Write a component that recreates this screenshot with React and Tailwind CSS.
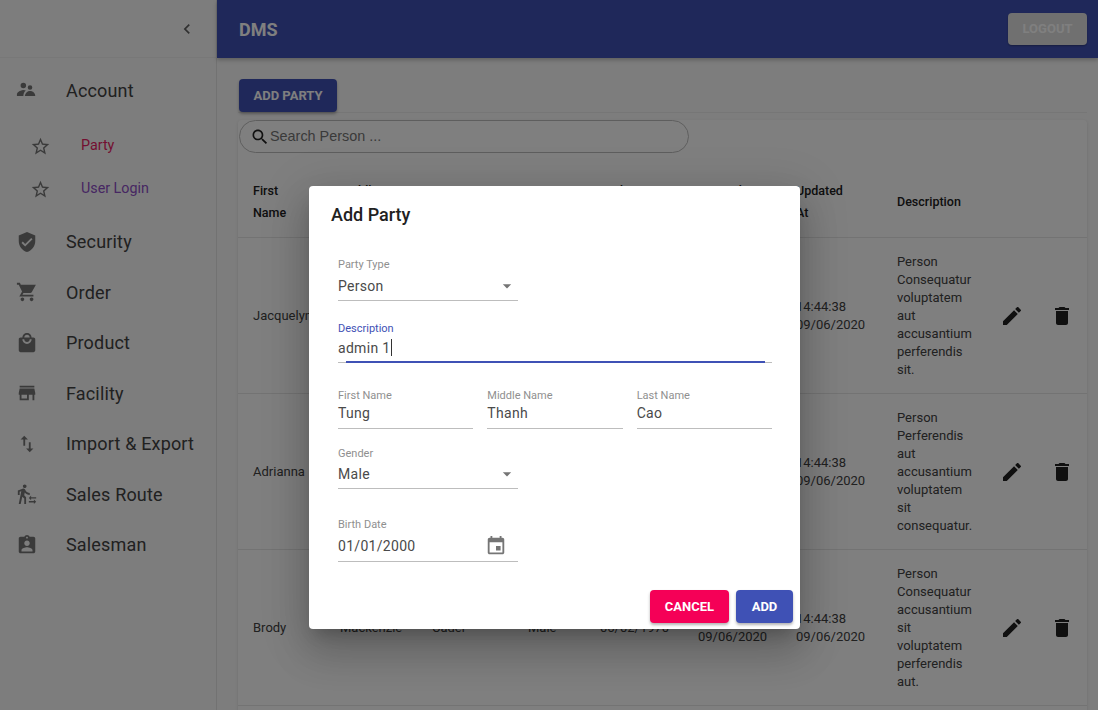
import React from 'react';

const ICONS = {
    // two people, drawn by hand: the package icons have the heads level
    people: 'M8 4.2a3 3 0 1 0 0 6a3 3 0 1 0 0-6z M15.3 6.8a2.5 2.5 0 1 0 0 5a2.5 2.5 0 1 0 0-5z M1 18.5v-1.5c0-2.2 3-4.5 7-5 1 0 2 .2 2.7.6C9 14 8.2 16 8 18.5z M9.7 18.5c.3-2.6 2-5.5 5.6-5.5 3.4 0 5.7 2.4 5.7 5.5z',
    star: 'M22 9.24l-7.19-.62L12 2 9.19 8.63 2 9.24l5.46 4.73L5.82 21 12 17.27 18.18 21l-1.63-7.03L22 9.24zM12 15.4l-3.76 2.27 1-4.28-3.32-2.88 4.38-.38L12 6.1l1.71 4.04 4.38.38-3.32 2.88 1 4.28L12 15.4z',
    security: 'M12 1L3 5v6c0 5.55 3.84 10.74 9 12 5.16-1.26 9-6.45 9-12V5l-9-4zm-2 16l-4-4 1.41-1.41L10 14.17l6.59-6.59L18 9l-8 8z',
    cart: 'M7 18c-1.1 0-1.99.9-1.99 2S5.9 22 7 22s2-.9 2-2-.9-2-2-2zm10 0c-1.1 0-1.99.9-1.99 2s.89 2 1.99 2 2-.9 2-2-.9-2-2-2zm-1.45-5c.75 0 1.41-.41 1.75-1.03L21.7 4H5.21l-.94-2H1v2h2l3.6 7.59L3.62 17H19v-2H7l1.1-2h7.45z',
    mall: 'M19 6h-2c0-2.76-2.24-5-5-5S7 3.24 7 6H5c-1.1 0-1.99.9-1.99 2L3 20c0 1.1.9 2 2 2h14c1.1 0 2-.9 2-2V8c0-1.1-.9-2-2-2zm-7-3c1.66 0 3 1.34 3 3H9c0-1.66 1.34-3 3-3zm0 10c-2.76 0-5-2.24-5-5h2c0 1.66 1.34 3 3 3s3-1.34 3-3h2c0 2.76-2.24 5-5 5z',
    store: 'M20 4H4v2h16V4zm1 10v-2l-1-5H4l-1 5v2h1v6h10v-6h4v6h2v-6h1zm-9 4H6v-4h6v4z',
    importExport: 'M9 3L5 6.99h3V14h2V6.99h3L9 3zm7 14.01V10h-2v7.01h-3L15 21l4-3.99h-3z',
    transfer: 'M16.49 15.5v-1.75L14 16.25l2.49 2.5V17H22v-1.5zm3.02 4.25H14v1.5h5.51V23L22 20.5 19.51 18zM9.5 5.5c1.1 0 2-.9 2-2s-.9-2-2-2-2 .9-2 2 .9 2 2 2zM5.75 8.9L3 23h2.1l1.75-8L9 17v6h2v-7.55L8.95 13.4l.6-3C10.85 12 12.8 13 15 13v-2c-1.85 0-3.45-1-4.35-2.45l-.95-1.6C9.35 6.35 8.7 6 8 6c-.25 0-.5.05-.75.15L2 8.3V13h2V9.65l1.75-.75',
    assignment: 'M19 3h-4.18C14.4 1.84 13.3 1 12 1c-1.3 0-2.4.84-2.82 2H5c-1.1 0-2 .9-2 2v14c0 1.1.9 2 2 2h14c1.1 0 2-.9 2-2V5c0-1.1-.9-2-2-2zm-7 0c.55 0 1 .45 1 1s-.45 1-1 1-1-.45-1-1 .45-1 1-1zm0 4c1.66 0 3 1.34 3 3s-1.34 3-3 3-3-1.34-3-3 1.34-3 3-3zm6 12H6v-1.4c0-2 4-3.1 6-3.1s6 1.1 6 3.1V19z',
    edit: 'M3 17.25V21h3.75L17.81 9.94l-3.75-3.75L3 17.25zM20.71 7.04c.39-.39.39-1.02 0-1.41l-2.34-2.34c-.39-.39-1.02-.39-1.41 0l-1.83 1.83 3.75 3.75 1.83-1.83z',
    trash: 'M6 19c0 1.1.9 2 2 2h8c1.1 0 2-.9 2-2V7H6v12zM19 4h-3.5l-1-1h-5l-1 1H5v2h14V4z',
    search: 'M15.5 14h-.79l-.28-.27C15.41 12.59 16 11.11 16 9.5 16 5.91 13.09 3 9.5 3S3 5.91 3 9.5 5.91 16 9.5 16c1.61 0 3.09-.59 4.23-1.57l.27.28v.79l5 4.99L20.49 19l-4.99-5zm-6 0C7.01 14 5 11.99 5 9.5S7.01 5 9.5 5 14 7.01 14 9.5 11.99 14 9.5 14z',
    event: 'M17 12h-5v5h5v-5zM16 1v2H8V1H6v2H5c-1.11 0-1.99.9-1.99 2L3 19c0 1.1.89 2 2 2h14c1.1 0 2-.9 2-2V5c0-1.1-.9-2-2-2h-1V1h-2zm3 18H5V8h14v11z',
    chevron: 'M15.41 7.41L14 6l-6 6 6 6 1.41-1.41L10.83 12z',
    dropdown: 'M7 10l5 5 5-5z',
};

function Icon({ name, className }) {
    return (
        <svg viewBox="0 0 24 24" fill="currentColor" className={className}>
            <path d={ICONS[name]} />
        </svg>
    );
}

const MENU_TOP = [{ icon: 'people', label: 'Account' }];
const MENU_BOTTOM = [
    { icon: 'security', label: 'Security' },
    { icon: 'cart', label: 'Order' },
    { icon: 'mall', label: 'Product' },
    { icon: 'store', label: 'Facility' },
    { icon: 'importExport', label: 'Import & Export' },
    { icon: 'transfer', label: 'Sales Route' },
    { icon: 'assignment', label: 'Salesman' },
];

const HEADERS = ['First Name', 'Middle Name', 'Last Name', 'Gender', 'Birth Date', 'Created At', 'Updated At', 'Description'];

const ROWS = [
    { first: 'Jacquelyn', middle: 'Mackenzie', last: 'Cader', gender: 'Male', birth: '06/02/1970', desc: 'Person Consequatur voluptatem aut accusantium perferendis sit.' },
    { first: 'Adrianna', middle: 'Mackenzie', last: 'Cader', gender: 'Male', birth: '06/02/1970', desc: 'Person Perferendis aut accusantium voluptatem sit consequatur.' },
    { first: 'Brody', middle: 'Mackenzie', last: 'Cader', gender: 'Male', birth: '06/02/1970', desc: 'Person Consequatur accusantium sit voluptatem perferendis aut.' },
];

function MenuRow({ icon, label }) {
    return (
        <div className="flex h-[50.5px] items-center pl-[16px]">
            <Icon name={icon} className="h-[22px] w-[22px] text-[#757575]" />
            <span className="ml-[28px] text-[18px] tracking-[0.17px] text-[#424242]">{label}</span>
        </div>
    );
}

function SubRow({ label, className }) {
    return (
        <div className="flex h-[43px] items-center pl-[30px]">
            <Icon name="star" className="h-[21px] w-[21px] text-[#757575]" />
            <span className={'ml-[30px] text-[14.3px] ' + className}>{label}</span>
        </div>
    );
}

function Sidebar() {
    return (
        <aside className="flex w-[217px] shrink-0 flex-col border-r border-[#e4e4e4]">
            <div className="flex h-[58px] items-center justify-end border-b border-[#f0f0f0] pr-[19px]">
                <Icon name="chevron" className="h-[20px] w-[20px] text-[#616161]" />
            </div>
            <div className="pt-[7px]">
                {MENU_TOP.map((item) => <MenuRow key={item.label} {...item} />)}
                <div className="pt-[9px] pb-[6px]">
                    <SubRow label="Party" className="text-[#e91e63]" />
                    <SubRow label="User Login" className="text-[#8e4ec6]" />
                </div>
                {MENU_BOTTOM.map((item) => <MenuRow key={item.label} {...item} />)}
            </div>
        </aside>
    );
}

function PartyTable() {
    return (
        <table className="w-full table-fixed border-collapse text-[13px] text-[#424242]">
            <colgroup>
                <col className="w-[87px]" />
                <col className="w-[92px]" />
                <col className="w-[96px]" />
                <col className="w-[72px]" />
                <col className="w-[98px]" />
                <col className="w-[98px]" />
                <col className="w-[101px]" />
                <col className="w-[103px]" />
                <col className="w-[52px]" />
                <col />
            </colgroup>
            <thead>
                <tr className="h-[69px] border-b border-[#e6e6e6]">
                    {HEADERS.map((h) => (
                        <th key={h} className="pl-[15px] text-left text-[12.5px] leading-[22px] font-medium text-[#212121]">
                            <span className="block w-min">{h}</span>
                        </th>
                    ))}
                    <th />
                    <th />
                </tr>
            </thead>
            <tbody>
                {ROWS.map((row) => (
                    <tr key={row.first} className="h-[156px] border-b border-[#e6e6e6]">
                        <td className="pt-[2px] pl-[15px]">{row.first}</td>
                        <td className="pt-[2px] pl-[15px]">{row.middle}</td>
                        <td className="pt-[2px] pl-[15px]">{row.last}</td>
                        <td className="pt-[2px] pl-[15px]">{row.gender}</td>
                        <td className="pt-[2px] pl-[15px]">{row.birth}</td>
                        <td className="pt-[2px] pl-[15px] leading-[18px]">14:44:38<br />09/06/2020</td>
                        <td className="pt-[2px] pl-[15px] leading-[18px]">14:44:38<br />09/06/2020</td>
                        <td className="pt-[2px] pr-[12px] pl-[15px] leading-[18px]">{row.desc}</td>
                        <td className="pt-[2px] pl-[15px]"><Icon name="edit" className="h-[24px] w-[24px] text-[#212121]" /></td>
                        <td className="pt-[2px] pl-[13px]"><Icon name="trash" className="h-[24px] w-[24px] text-[#212121]" /></td>
                    </tr>
                ))}
                <tr className="h-[156px]"><td colSpan={10} /></tr>
            </tbody>
        </table>
    );
}

function Field({ label, value, labelClass, valueClass, className, children }) {
    return (
        <div className={className}>
            <div className={'h-[14px] text-[11px] leading-[14px] ' + (labelClass || 'text-[#8f8f8f]')}>{label}</div>
            <div className={'flex h-[24px] items-center justify-between text-[14px] tracking-[0.3px] text-[#4a4a4a] ' + valueClass}>
                <span>{value}</span>
                {children}
            </div>
        </div>
    );
}

function Dialog() {
    return (
        <div className="absolute top-[186px] left-[309px] h-[443px] w-[491px] rounded-[4px] bg-white shadow-[0_11px_15px_-7px_rgba(0,0,0,0.2),0_24px_38px_3px_rgba(0,0,0,0.14),0_9px_46px_8px_rgba(0,0,0,0.12)]">
            <h2 className="pt-[17px] pl-[22px] text-[18px] leading-[24px] font-medium text-[#212121]">Add Party</h2>
            <div className="px-[29px] pt-[31px]">
                <Field label="Party Type" value="Person" className="w-[180px]" valueClass="mt-[2px] mb-[2px]">
                    <Icon name="dropdown" className="mr-[1px] h-[20px] w-[20px] text-[#757575]" />
                </Field>
                <div className="w-[180px] border-b border-[#bdbdbd]" />
                <Field label="Description" value={<>admin 1<span className="ml-[1px] inline-block h-[17px] w-[1px] bg-[#333] align-[-3px]" /></>} className="mt-[21px]" labelClass="text-[#3f51b5]" valueClass="mt-0" />
                <div className="relative mt-[2px] w-[434px] border-b border-[#bdbdbd]">
                    <div className="absolute right-[7px] -bottom-[1px] left-[8px] h-[2px] bg-[#3f51b5]" />
                </div>
                <div className="mt-[26px] flex w-[434px] gap-[14px]">
                    {[['First Name', 'Tung'], ['Middle Name', 'Thanh'], ['Last Name', 'Cao']].map(([label, value]) => (
                        <div key={label} className="flex-1">
                            <Field label={label} value={value} valueClass="-mt-[2px] mb-[3px]" />
                            <div className="border-b border-[#bdbdbd]" />
                        </div>
                    ))}
                </div>
                <Field label="Gender" value="Male" className="mt-[18px] w-[180px]" valueClass="mt-[1px] mb-[2px]">
                    <Icon name="dropdown" className="mr-[1px] h-[20px] w-[20px] text-[#757575]" />
                </Field>
                <div className="w-[180px] border-b border-[#bdbdbd]" />
                <Field label="Birth Date" value="01/01/2000" className="mt-[29px] w-[180px]" valueClass="mt-[2px] mb-[3px]">
                    <Icon name="event" className="mr-[11px] h-[22px] w-[22px] text-[#757575]" />
                </Field>
                <div className="w-[180px] border-b border-[#bdbdbd]" />
            </div>
            <div className="mt-[28px] flex justify-end gap-[7px] pr-[7px]">
                <button className="h-[33px] w-[79px] rounded-[4px] bg-[#f50057] text-[13px] font-bold text-white shadow-[0_2px_3px_rgba(0,0,0,0.3)]">CANCEL</button>
                <button className="h-[33px] w-[57px] rounded-[4px] bg-[#3f51b5] text-[13px] font-bold text-white shadow-[0_2px_3px_rgba(0,0,0,0.3)]">ADD</button>
            </div>
        </div>
    );
}

export default function App() {
    return (
        <div className="relative flex h-screen overflow-hidden bg-[#fafafa] font-['Roboto',sans-serif]">
            <Sidebar />
            <div className="flex min-w-0 flex-1 flex-col">
                <header className="flex h-[58px] shrink-0 items-center justify-between bg-[#3f51b5] pr-[11px] pl-[22px] shadow-[0_2px_4px_rgba(0,0,0,0.25)]">
                    <span className="text-[18px] font-bold text-white">DMS</span>
                    <button className="h-[32px] w-[79px] rounded-[4px] bg-[#e0e0e0] text-[13px] font-bold text-white shadow-[0_1px_2px_rgba(0,0,0,0.3)]">LOGOUT</button>
                </header>
                <main className="pt-[21px] pr-[11px] pl-[21px]">
                    <div className="border-b border-[#ececec]">
                        <button className="ml-[1px] h-[33px] w-[98px] rounded-[4px] bg-[#3f51b5] text-[13px] font-bold text-white shadow-[0_2px_3px_rgba(0,0,0,0.3)]">ADD PARTY</button>
                    </div>
                    <div className="mt-[7px] rounded-[4px] bg-white shadow-[0_1px_3px_rgba(0,0,0,0.12)]">
                        <div className="ml-[1px] flex h-[33px] w-[450px] items-center rounded-[17px] border border-[#bdbdbd] pl-[10px]">
                            <Icon name="search" className="h-[20px] w-[20px] text-[#212121]" />
                            <span className="font-['Liberation_Sans',sans-serif] text-[14.4px] text-[#757575]">Search Person ...</span>
                        </div>
                        <div className="pt-[15px]">
                            <PartyTable />
                        </div>
                    </div>
                </main>
            </div>
            <div className="absolute inset-0 bg-black/50" />
            <Dialog />
        </div>
    );
}
